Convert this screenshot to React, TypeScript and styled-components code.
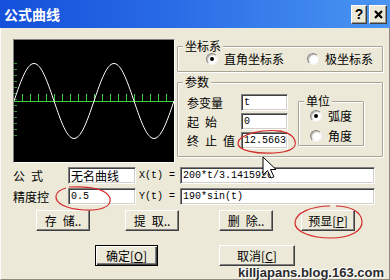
import React from 'react';
import styled, { createGlobalStyle } from 'styled-components';

const cjk = `"Noto Sans CJK SC", "Liberation Sans", sans-serif`;
const mono = `"Liberation Mono", "Noto Sans CJK SC", monospace`;

const Global = createGlobalStyle`
  html, body { margin: 0; padding: 0; background: #ECE9D8; }
  body { width: 390px; height: 280px; overflow: hidden; }
`;

const Window = styled.div`
  position: relative;
  width: 390px;
  height: 280px;
  box-sizing: border-box;
  display: flex;
  flex-direction: column;
  background: #ECE9D8;
  font-family: ${cjk};
  font-size: 12px;
  color: #000;
`;

const TitleBar = styled.div`
  flex: none;
  height: 28px;
  display: flex;
  align-items: center;
  gap: 2px;
  padding: 0 3px 0 4px;
  background: linear-gradient(90deg, #1450da 0%, #2a6ce6 45%, #4a96f2 100%);
`;

const Title = styled.div`
  flex: 1;
  color: #fff;
  font-weight: bold;
  font-size: 14px;
  line-height: 16px;
`;

const TitleButton = styled.div<{ $w: number }>`
  width: ${p => p.$w}px;
  height: 19px;
  box-sizing: border-box;
  display: flex;
  align-items: center;
  justify-content: center;
  background: #ECE9D8;
  border: 1px solid;
  border-color: #fff #404040 #404040 #fff;
  box-shadow: inset -1px -1px 0 #9a978a;
  font-family: "Liberation Sans", sans-serif;
  font-weight: bold;
  font-size: 14px;
  color: #000;
`;

const Body = styled.div`
  flex: 1;
  position: relative;
  display: flex;
  flex-direction: column;
  padding: 11px 6px 0 12px;
  border-left: 1px solid #fbfaf6;
  border-right: 1px solid #8c8a80;
  border-bottom: 1px solid #8c8a80;
`;

const TopRow = styled.div`
  display: flex;
  gap: 2px;
`;

const Chart = styled.div`
  width: 162px;
  height: 124px;
  box-sizing: border-box;
  border: 1px solid;
  border-color: #808080 #fff #fff #808080;
  background: #000;
  svg { display: block; }
`;

const RightCol = styled.div`
  width: 206px;
  margin-top: 1px;
  display: flex;
  flex-direction: column;
  gap: 4px;
`;

const Group = styled.fieldset<{ $w?: number }>`
  margin: 0;
  min-width: 0;
  padding: 0;
  ${p => (p.$w ? `width: ${p.$w}px; box-sizing: border-box;` : '')}
  border: 1px solid #a8a596;
  border-radius: 1px;
  box-shadow: inset 1px 1px 0 #fff, 1px 1px 0 #fff;
`;

const UnitGroup = styled(Group)`
  margin-left: 10px;
  margin-top: 1px;
  flex: none;
`;

const Legend = styled.legend`
  margin-left: 5px;
  padding: 0 2px;
  line-height: 12px;
  font-size: 12px;
  background: #ECE9D8;
`;

const RadioRow = styled.div`
  display: flex;
  align-items: center;
  gap: 23px;
  height: 14px;
  padding: 0 0 5px 28px;
`;

const RadioCol = styled.div`
  display: flex;
  flex-direction: column;
  gap: 2px;
  padding-left: 11px;
`;

const Choice = styled.label<{ $h?: number }>`
  display: flex;
  align-items: center;
  gap: 6px;
  height: ${p => p.$h ?? 14}px;
  line-height: 14px;
`;

const Radio = styled.span<{ $on?: boolean }>`
  width: 12px;
  height: 12px;
  box-sizing: border-box;
  border-radius: 50%;
  border: 1px solid;
  border-color: #8a8a8a #f4f4f4 #f4f4f4 #8a8a8a;
  background: radial-gradient(circle at 60% 60%, #ffffff 35%, #e2e0d6 100%);
  box-shadow: inset 1px 1px 0 #b8b8b0;
  display: flex;
  align-items: center;
  justify-content: center;
  &::after {
    content: '';
    width: 4px;
    height: 4px;
    border-radius: 50%;
    background: ${p => (p.$on ? '#000' : 'transparent')};
  }
`;

const ParamBody = styled.div`
  display: flex;
  align-items: flex-start;
  padding: 6px 0 7px 9px;
`;

const ParamGrid = styled.div`
  display: grid;
  grid-template-columns: 54px 47px;
  grid-auto-rows: 17px;
  row-gap: 2px;
  align-items: center;
`;

const Label = styled.span<{ $w?: number }>`
  ${p => (p.$w ? `width: ${p.$w}px; flex: none;` : '')}
  white-space: pre;
  line-height: 14px;
`;

const MonoLabel = styled.span<{ $w: number; $ml: number }>`
  width: ${p => p.$w}px;
  margin-left: ${p => p.$ml}px;
  flex: none;
  font-family: ${mono};
  font-size: 10px;
  white-space: pre;
`;

const Input = styled.div<{ $w?: number; $cjk?: boolean }>`
  ${p => (p.$w ? `width: ${p.$w}px;` : 'width: 100%;')}
  height: 17px;
  box-sizing: border-box;
  flex: none;
  display: flex;
  align-items: center;
  padding-left: 2px;
  background: #fff;
  border: 1px solid;
  border-color: #808080 #fff #fff #808080;
  box-shadow: inset 1px 1px 0 #404040, inset -1px -1px 0 #d4d0c8;
  font-family: ${p => (p.$cjk ? cjk : mono)};
  font-size: ${p => (p.$cjk ? 12 : 10)}px;
  white-space: pre;
  overflow: hidden;
`;

const FormRow = styled.div<{ $mt: number }>`
  display: flex;
  align-items: center;
  height: 17px;
  margin-top: ${p => p.$mt}px;
`;

const ButtonRow = styled.div<{ $mt: number }>`
  display: flex;
  margin-top: ${p => p.$mt}px;
`;

const Button = styled.div<{ $w: number; $ml: number; $default?: boolean }>`
  width: ${p => p.$w}px;
  height: 21px;
  margin-left: ${p => p.$ml}px;
  box-sizing: border-box;
  display: flex;
  align-items: center;
  justify-content: center;
  background: #ECE9D8;
  border: 1px solid;
  border-color: ${p => (p.$default ? '#000' : '#fff #404040 #404040 #fff')};
  box-shadow: ${p =>
    p.$default
      ? 'inset 1px 1px 0 #fff, inset -1px -1px 0 #404040, inset -2px -2px 0 #808080'
      : 'inset -1px -1px 0 #808080'};
  white-space: pre;
  font-size: 12px;
  u { text-decoration: underline; text-underline-offset: 1px; }
`;

const Watermark = styled.div`
  position: absolute;
  right: 5px;
  bottom: 0px;
  font-family: "Liberation Sans", Arial, sans-serif;
  font-weight: bold;
  font-size: 13px;
  line-height: 13px;
  color: #2a2a2a;
  text-shadow: 0 0 2px #fff, 1px 1px 0 #fff, -1px -1px 0 #fff;
`;

const Overlay = styled.svg`
  position: absolute;
  left: 0;
  top: 0;
  pointer-events: none;
`;

const sinePoints = Array.from({ length: 161 }, (_, i) =>
  `${i},${(61 - 37.5 * Math.sin((2 * Math.PI * i) / 80)).toFixed(2)}`
).join(' ');

const ticks = Array.from({ length: 20 }, (_, i) => 8 + i * 8);
const vDashes = Array.from({ length: 13 }, (_, i) => 23 + i * 6);

const SP = '\u2002';

function Plot() {
  return (
    <svg width={160} height={122} viewBox="0 0 160 122">
      {vDashes.map(y => (
        <line key={y} x1={0} y1={y + 0.5} x2={3} y2={y + 0.5} stroke="#2e8b2e" strokeWidth={1} />
      ))}
      <line x1={0} y1={61.5} x2={160} y2={61.5} stroke="#3cd03c" strokeWidth={1} />
      {ticks.map(x => (
        <line key={x} x1={x + 0.5} y1={54} x2={x + 0.5} y2={61} stroke="#3cd03c" strokeWidth={1} />
      ))}
      <polyline points={sinePoints} fill="none" stroke="#fff" strokeWidth={1} />
    </svg>
  );
}

export default function App() {
  return (
    <Window>
      <Global />
      <TitleBar>
        <Title>公式曲线</Title>
        <TitleButton $w={16}>?</TitleButton>
        <TitleButton $w={18}>
          <svg width={9} height={9} viewBox="0 0 9 9">
            <path d="M1 1 L8 8 M8 1 L1 8" stroke="#000" strokeWidth={2.2} />
          </svg>
        </TitleButton>
      </TitleBar>
      <Body>
        <TopRow>
          <Chart>
            <Plot />
          </Chart>
          <RightCol>
            <Group>
              <Legend>坐标系</Legend>
              <RadioRow>
                <Choice>
                  <Radio $on />
                  直角坐标系
                </Choice>
                <Choice>
                  <Radio />
                  极坐标系
                </Choice>
              </RadioRow>
            </Group>
            <Group>
              <Legend>参数</Legend>
              <ParamBody>
                <ParamGrid>
                  <Label>参变量</Label>
                  <Input>t</Input>
                  <Label>{`起${SP}始`}</Label>
                  <Input>0</Input>
                  <Label>{`终${SP}止${SP}值`}</Label>
                  <Input>12.5663</Input>
                </ParamGrid>
                <UnitGroup $w={66}>
                  <Legend>单位</Legend>
                  <RadioCol>
                    <Choice $h={18}>
                      <Radio $on />
                      弧度
                    </Choice>
                    <Choice $h={18}>
                      <Radio />
                      角度
                    </Choice>
                  </RadioCol>
                </UnitGroup>
              </ParamBody>
            </Group>
          </RightCol>
        </TopRow>
        <FormRow $mt={4}>
          <Label $w={55}>{`公${SP}式`}</Label>
          <Input $w={68} $cjk>无名曲线</Input>
          <MonoLabel $w={41} $ml={3}>X(t) =</MonoLabel>
          <Input $w={195}>200*t/3.1415926</Input>
        </FormRow>
        <FormRow $mt={4}>
          <Label $w={55}>精度控</Label>
          <Input $w={68}>0.5</Input>
          <MonoLabel $w={41} $ml={3}>Y(t) =</MonoLabel>
          <Input $w={195}>190*sin(t)</Input>
        </FormRow>
        <ButtonRow $mt={5}>
          <Button $w={54} $ml={23}>{`存${SP}储..`}</Button>
          <Button $w={54} $ml={35}>{`提${SP}取..`}</Button>
          <Button $w={54} $ml={40}>{`删${SP}除..`}</Button>
          <Button $w={54} $ml={28}>预显[<u>P</u>]</Button>
        </ButtonRow>
        <ButtonRow $mt={14}>
          <Button $w={63} $ml={82} $default>确定[<u>O</u>]</Button>
          <Button $w={76} $ml={61}>取消[<u>C</u>]</Button>
        </ButtonRow>
        <Watermark>killjapans.blog.163.com</Watermark>
      </Body>
      <Overlay width={390} height={280} viewBox="0 0 390 280">
        <g fill="none" stroke="#d42a2a" strokeWidth={1.2}>
          <path d="M282 131 C262 129 239 134 238 143 C237 151 258 154 274 153 C290 152 297 148 295 141 C293 134 284 131 276 131" />
          <path d="M69 187 C90 186 106 188 110 198 C112 207 100 211 84 210 C66 209 55 203 56 196 C57 191 62 189 66 188" />
          <path d="M330 206 C311 206 296 213 295 222 C294 232 312 238 331 238 C350 238 363 231 362 221 C361 211 349 206 336 206" />
        </g>
        <path
          d="M263 157 L263 175 L267.5 170.5 L271 178 L274 176.8 L270.5 169.5 L276 169.5 Z"
          fill="#fff"
          stroke="#000"
          strokeWidth={1}
          strokeLinejoin="miter"
        />
      </Overlay>
    </Window>
  );
}
